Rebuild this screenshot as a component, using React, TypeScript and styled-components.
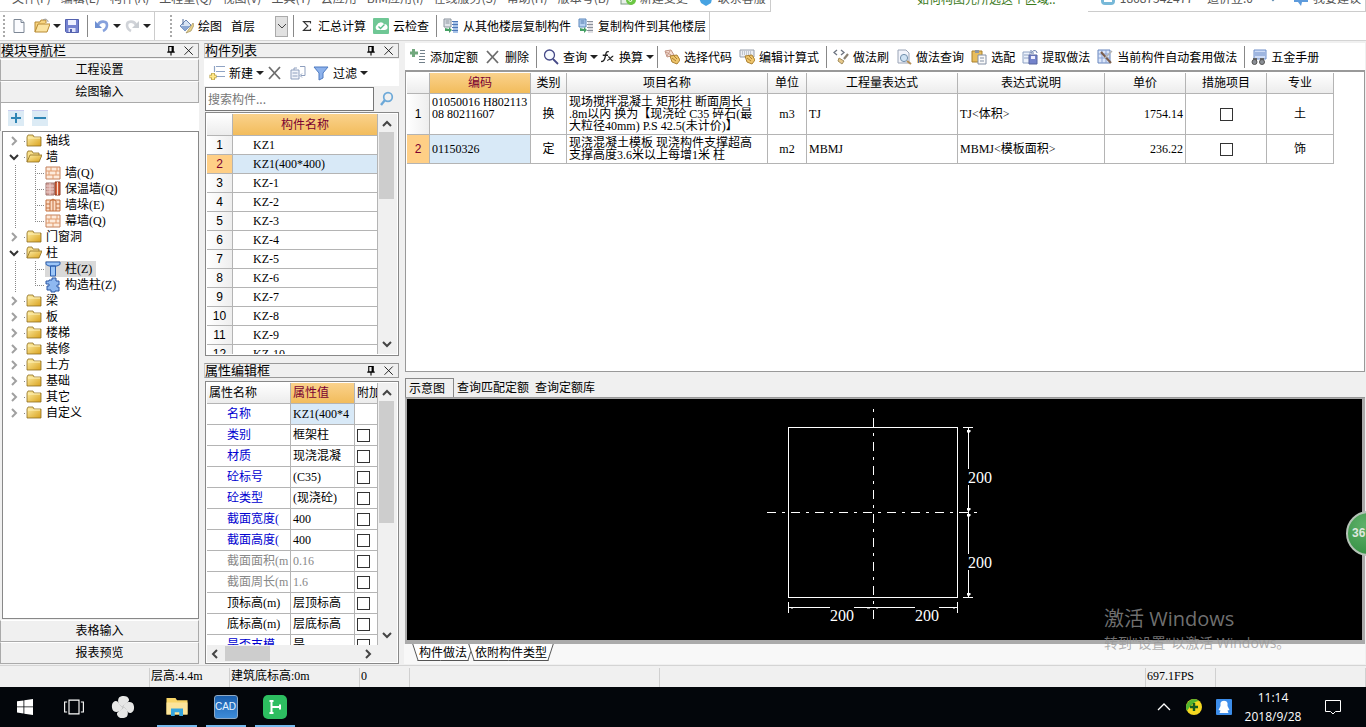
import React from 'react';
import styled, { createGlobalStyle, css } from 'styled-components';

const songti = "'Liberation Serif', 'Noto Sans CJK SC', serif";
const yahei = "'Noto Sans CJK SC', 'Open Sans', sans-serif";
const segoe = "'Open Sans', 'Noto Sans CJK SC', sans-serif";

const Global = createGlobalStyle`
  *, *::before, *::after { box-sizing: border-box; }
  body { margin: 0; background: #f0f0f0; color: #000; font: 12px/16px ${songti}; overflow: hidden; }
  button, input, select { font: inherit; color: inherit; margin: 0; }
  button { border: 0; padding: 0; background: none; white-space: nowrap; }
  svg { display: block; flex: none; }
`;

/* ---------- icons ---------- */

const paths: Record<string, React.ReactNode> = {
  doc: <><path d="M3 1.5h7l3 3v10H3z" fill="#fbfcff" stroke="#7d8795" /><path d="M10 1.5v3h3" fill="#dfe5ee" stroke="#7d8795" /></>,
  open: <><path d="M1 14V4h5l1-2h5v3" fill="#f7d480" stroke="#b78a34" /><path d="M1 14l3-8h12l-3 8z" fill="#fbe3a0" stroke="#b78a34" /><path d="M9 2c3-2 5 0 5 2" fill="none" stroke="#999" /></>,
  save: <><path d="M1.500 1.500h13v13h-12l-1-1z" fill="#7482d0" stroke="#5361ae" /><path d="M4 2h8v5H4z" fill="#eef1ff" /><path d="M4.500 10h7v4h-7z" fill="#dfe3fa" /><path d="M6 11h2v3H6z" fill="#5361ae" /></>,
  undo: <><path d="M4 7c2-5 9-4 9 0 0 3-2 5-4 6" fill="none" stroke="#86a1dc" strokeWidth="2.600" /><path d="M1 3v7h7z" fill="#6d8fd2" /></>,
  redo: <><path d="M12 7c-2-5-9-4-9 0 0 3 2 5 4 6" fill="none" stroke="#d0d3d8" strokeWidth="2.600" /><path d="M15 3v7H8z" fill="#c9cdd2" /></>,
  paint: <><path d="M2 8l6-6 5 5-6 6z" fill="#d8e4f4" stroke="#6b87b5" /><path d="M5 1v6" stroke="#506d9b" /><path d="M2 8h10l-5 5z" fill="#8ba7d3" /><path d="M15 5l-4 6-3 4 5-2 3-6z" fill="#ead28a" stroke="#9d8e5c" strokeWidth=".7" /></>,
  sigma: <path d="M12 5V3H4l5 5-5 5h8v-2" fill="none" stroke="#333" strokeWidth="1.300" />,
  cloud: <><rect width="16" height="16" rx="1" fill="#6fc795" /><path d="M4 12a3 3 0 010-5 4 4 0 017-1 3 3 0 011 6z" fill="#fff" /><path d="M5.500 8.500l2 2 4-4" fill="none" stroke="#58bd8a" strokeWidth="1.300" /></>,
  copyFloor: <><path d="M1 1h7v8H1z" fill="#e1e5ea" stroke="#8a929c" /><path d="M2.500 3h4M2.500 5h4" stroke="#8a929c" /><path d="M10 3h5v12h-5z" fill="#a8c3e8" /><path d="M9 3.500h6M9 6.500h6M9 9.500h6M9 12.500h6" stroke="#4d79b8" /><path d="M2 10v3h4v2l3-3-3-3v2z" fill="#45a064" /></>,
  copyFloorTo: <><path d="M1 1h7v8H1z" fill="#b6d2f2" stroke="#5c87bb" /><path d="M2.500 3h4M2.500 5h4" stroke="#4f77aa" /><path d="M10 3h5v12h-5z" fill="#e0e0e4" /><path d="M9 3.500h6M9 6.500h6M9 9.500h6M9 12.500h6" stroke="#8b919b" /><path d="M2 10v3h4v2l3-3-3-3v2z" fill="#45a064" /></>,
  addList: <><path d="M3.500 0v8M0 4h8" stroke="#72a87e" strokeWidth="3" /><path d="M10 1.500h5M10 4.500h5M9 7.500h6M9 10.500h6M9 13.500h6" stroke="#72808a" /></>,
  newItem: <><path d="M7 1.500h9M7 6.500h9M7 11.500h9M5.500 1v6" stroke="#8fa3c4" strokeWidth="1.200" fill="none" /><path d="M4 8v7M.5 11.500h7" stroke="#b49a36" strokeWidth="3.600" /><path d="M4 8.500v6M1 11.500h6" stroke="#ffe88a" strokeWidth="2" /></>,
  cross: <path d="M2 2l11 12M13 2L2 14" stroke="#6d6d6d" strokeWidth="1.800" />,
  copy: <><path d="M1 5h8v9H1z" fill="#f2f5fb" stroke="#8e9fbe" /><path d="M2.500 8h5M2.500 11h5M4 5V3h3" stroke="#8e9fbe" fill="none" /><path d="M10 1.500h5v9h-4M12 8.500l-2 2 2 2" fill="none" stroke="#8e9fbe" /></>,
  filter: <path d="M1 2h14l-5 6v5l-4 2V8z" fill="#8db2ec" stroke="#4f7bc0" />,
  search: <><circle cx="6.500" cy="6" r="5" fill="#f7faff" stroke="#454987" strokeWidth="1.300" /><path d="M10 10l5 5" stroke="#454987" strokeWidth="1.800" /></>,
  find: <><circle cx="9" cy="6" r="4.300" fill="none" stroke="#6da9d8" strokeWidth="1.700" /><path d="M6 9l-4 5" stroke="#6da9d8" strokeWidth="2.400" /></>,
  fx: <><path d="M9 2C6 1 5.500 4 5 7S3 14 0 13M2 6h6" fill="none" stroke="#222" strokeWidth="1.500" /><path d="M8 8c3-1 2 5 6 4M14 7c-2 0-4 5-7 5" fill="none" stroke="#222" strokeWidth="1.300" /></>,
  codeHand: <><path d="M1 2l6-1 3 5-7 2z" fill="#f7dfd5" stroke="#c29584" /><path d="M2 3l5 3M6 2L3 7" stroke="#c29584" /><path d="M6 7l7-1 3 5-3 4-5-2z" fill="#efc56b" stroke="#ac8132" /><path d="M8 9l4 3M10 7l3 3" stroke="#ac8132" /></>,
  calcHand: <><path d="M1 1h14v7H1z" fill="#eceef3" stroke="#979eab" /><path d="M3 3h10M3 5h10" stroke="#979eab" strokeDasharray="1 1" /><path d="M6 7l7-1 3 5-3 4-5-2z" fill="#efc56b" stroke="#ac8132" /><path d="M8 9l4 3M10 7l3 3" stroke="#ac8132" /></>,
  brush: <><path d="M4 1L1 3.500 4 6M8 1l3 2.500L8 6" fill="none" stroke="#6d7480" strokeWidth="1.300" /><path d="M15 5l-4 5" stroke="#8a8171" strokeWidth="2.200" /><path d="M6 9l5 3-2 3-4-3z" fill="#e7c98a" stroke="#a38d5e" /></>,
  docSearch: <><path d="M2 1h8l3 3v10H2z" fill="#f2f4fb" stroke="#9aa4b6" /><circle cx="8" cy="9" r="3.600" fill="#cfe2f3" stroke="#7290ac" /><path d="M11 12l4 3" stroke="#b58e55" strokeWidth="2" /></>,
  paste: <><path d="M1 2h10v11H1z" fill="#e8bd5c" stroke="#a8802f" /><path d="M4 1h4v3H4z" fill="#8f969f" /><path d="M7 6h8v9H7z" fill="#fafafa" stroke="#8390a5" /><path d="M9 9h4M9 12h4" stroke="#8390a5" /></>,
  extract: <><path d="M1 3h7v11H1z" fill="#edf2fb" stroke="#8ea2c4" /><path d="M2 6h5M2 9h5" stroke="#8ea2c4" /><path d="M7 6h8v9H7z" fill="#7483cb" stroke="#56649f" /><path d="M9 7h4v3H9z" fill="#eef" /><path d="M15 4c0-3-4-3-5-1M9 1v3h3" fill="none" stroke="#5c74a5" /></>,
  auto: <><path d="M1 1h12v13H1z" fill="#dbe6fa" stroke="#6785bd" /><path d="M1 5h12M1 9h12M5 1v13M9 1v13" stroke="#8ba3d3" /><path d="M4 3l10 11" stroke="#7b5d4b" strokeWidth="2" /><path d="M15 2l-7 7" stroke="#b4b4b4" strokeWidth="1.500" /></>,
  manual: <><path d="M3 1h12v9H3z" fill="#cedcf6" stroke="#6f8fc9" /><path d="M4 4h10M4 6h10" stroke="#6f8fc9" /><path d="M2 9h4v4H2zM9 9h4v4H9z" fill="#666" /><circle cx="3.500" cy="13" r="2.500" fill="#8b8f95" stroke="#555" /><circle cx="11" cy="13" r="2.500" fill="#8b8f95" stroke="#555" /></>,
  plus: <><rect width="16" height="16" fill="#dcebf5" /><path d="M0 .5h16" stroke="#c9cdf0" /><path d="M8 3v10M3 8h10" stroke="#2f86b5" strokeWidth="2" /></>,
  minus: <><rect width="16" height="16" fill="#dcebf5" /><path d="M0 .5h16" stroke="#c9cdf0" /><path d="M2 8h12" stroke="#2f86b5" strokeWidth="2" /></>,
  folder: <><path d="M1 4l1-2h5l1 2h7v9H1z" fill="url(#gold)" stroke="#8d6d20" strokeWidth=".8" /><path d="M2 5h12" stroke="#fff3bd" /></>,
  folderOpen: <><path d="M1 13V4l1-2h4l1 2h6v2" fill="#f9e08b" stroke="#8d6d20" strokeWidth=".8" /><path d="M1 13l3-7h12l-3 7z" fill="url(#gold)" stroke="#8d6d20" strokeWidth=".8" /></>,
  wall: <><path d="M1 2h14v12H1z" fill="#fdebdc" stroke="#c4805a" /><path d="M1 6h14M1 10h14M6 2v4M11 6v4M4 6v4M8 10v4M12 2v4" stroke="#e09a6c" /></>,
  warm: <><path d="M1 2h8v12H1z" fill="#d4a09a" stroke="#a17670" /><path d="M1 5h8M1 8h8M1 11h8M5 2v12" stroke="#ead0cc" /><path d="M10 1h5v13h-5z" fill="#d76540" stroke="#8a3820" /><path d="M12.500 1v13" stroke="#fce2d0" /></>,
  pier: <><path d="M1 3h14v11H1z" fill="#fbdcc6" stroke="#c4703f" /><path d="M5 14V4l3-2 3 2v10M8 2v12M1 7h4M11 7h4M1 11h4M11 11h4" fill="none" stroke="#c4703f" /></>,
  column: <path d="M1 1h14v2.500L12 5H4L1 3.500zM5.500 5h5v10h-5z" fill="#9cc6f8" stroke="#2c5fae" />,
  structCol: <path d="M4 3h3V1h4v3h3v4h-2v2h2v4h-4v1H6v-2H2V9h2V7H1V4h3z" fill="#8fb9f0" stroke="#2a56a4" />,
  pin: <path d="M5 2h6v7H5zM9.500 2v7M3 9.500h10M8 10v4" fill="none" stroke="#000" strokeWidth="1.500" />,
  close: <path d="M2 2l11 11M13 2L2 13" stroke="#111" strokeWidth="1.200" />,
  refresh: <><rect x="1" y="1" width="11" height="13" fill="#e9efe9" stroke="#7b9a80" /><circle cx="11" cy="10" r="5" fill="#6cc644" /><path d="M8.500 10l2 2 3-4" stroke="#fff" fill="none" /></>,
  bird: <path d="M2 4l4-3h5l4 4-2 8-5 3-5-3-2-5z" fill="#47a3e2" />,
  mail: <><rect x="1" y="1" width="14" height="14" rx="4" fill="#77b8d8" /><path d="M4 7h8v5H4z" fill="#fff" /></>,
  chat: <path d="M1 2h14v10H9l-1 4-3-4H1z" fill="#5d9bdc" />,
  win: <path d="M0 2.300L6.500 1.400v6.100H0zM7.300 1.300L16 0v7.500H7.300zM0 8.300h6.500v6.200L0 13.600zM7.300 8.300H16V16l-8.700-1.300z" fill="#fff" />,
  view: <path d="M4 2.500h8v11H4zM2.500 4H.5v8h2M13.500 4h2v8h-2" fill="none" stroke="#fff" strokeWidth=".9" />,
  fan: <g fill="#e6e6e6">{[0, 90, 180, 270].map(a => <path key={a} d="M8 8C5 7.500 3.800 3.500 5.500 1.500 7.500 0 11.500.3 12 3 12.300 5.500 9 5 8 8z" transform={`rotate(${a} 8 8)`} />)}</g>,
  explorer: <><path d="M1 2h6l1 1.500h7V13H1z" fill="#f8d568" /><path d="M1 5h14v8H1z" fill="#fce49a" /><path d="M4 14V9h8v5h-2.500v-2.500h-3V14z" fill="#35a5df" /></>,
  branch: <path d="M4.500 1.500v13M2.500 2h4M2.500 14h4M5 8h8.500M13 5.500v5" fill="none" stroke="#fff" strokeWidth="2" />,
  shield: <><circle cx="8" cy="8" r="8" fill="#f5d820" /><path d="M1 12A8 8 0 0113 2C9 2 4 7 1 12z" fill="#53b531" /><path d="M8 4v8M4 8h8" stroke="#145a20" strokeWidth="2.400" /></>,
  penguin: <><rect width="16" height="16" rx="1" fill="#3c8dea" /><path d="M4.500 4c1-3 6-3 7 0v3l2 4-2 .5 1 2.500h-9l1-2.500L2.500 11l2-4z" fill="#fff" /></>,
  up: <path d="M2 11l6-6 6 6" fill="none" stroke="#fff" strokeWidth="1.300" />,
  note: <path d="M.5 1.500h15v11h-5L8 15l-2.500-2.500h-5z" fill="none" stroke="#fff" />,
};

const Icon = ({ name, size = 16 }: { name: string; size?: number }) => (
  <svg width={size} height={size} viewBox="0 0 16 16" aria-hidden="true">
    <defs><linearGradient id="gold" x1="0" y1="0" x2="1" y2="1"><stop offset="0" stopColor="#fff0a8" /><stop offset="1" stopColor="#d9a21e" /></linearGradient></defs>
    {paths[name]}
  </svg>
);

const arrowShapes = { up: 'M2 8l4-4 4 4', down: 'M2 4l4 4 4-4', left: 'M8 2L4 6l4 4', right: 'M4 2l4 4-4 4' };
const Arrow = ({ to, color = '#444', thin }: { to: keyof typeof arrowShapes; color?: string; thin?: boolean }) => (
  <svg width="12" height="12" viewBox="0 0 12 12" aria-hidden="true"><path d={arrowShapes[to]} fill="none" stroke={color} strokeWidth={thin ? 1 : 2} /></svg>
);

/* ---------- frame ---------- */

const Page = styled.div`
  position: relative; display: flex; flex-direction: column; height: 100vh; overflow: hidden; background: #f0f0f0;
`;
const MenuStrip = styled.nav`
  display: flex; justify-content: space-between; height: 12px; flex: none; background: #fff; font-family: ${yahei}; color: #555; overflow: hidden;
`;
const MenuGroup = styled.div<{ $gap: number }>`
  display: flex; align-items: flex-end; gap: ${p => p.$gap}px; padding: 0 4px 5px 12px; overflow: hidden;
  border: solid #ccc; border-width: 0 1px 1px 0;
`;
const MenuButton = styled.button`
  display: flex; align-items: center; gap: 4px; height: 16px; line-height: 16px;
`;
const Tip = styled.span`
  margin-left: auto; margin-right: 32px; height: 12px; display: flex; align-items: flex-end; padding-bottom: 5px; color: #3c7a1c; line-height: 16px;
`;
const Bars = styled.div`
  display: flex; height: 29px; flex: none; background: #fff; border-bottom: 1px solid #d4d4d4; font-family: ${yahei};
`;
const Bar = styled.div`
  display: flex; align-items: center; padding-left: 12px; margin-right: 12px; border-right: 1px solid #ccc;
  &::before { content: ''; align-self: center; width: 2px; height: 22px; margin-left: -9px; margin-right: 6px;
    background: repeating-linear-gradient(#aaa 0 2px, #fff 2px 4px); }
`;
const Tool = styled.button<{ $tight?: boolean }>`
  display: flex; align-items: center; gap: 4px; height: 22px; padding-right: ${p => (p.$tight ? 3 : 7)}px; line-height: 16px;
`;
const Caret = styled.i`
  margin-left: -1px; border: 4px solid transparent; border-top-color: #222; border-bottom: 0;
`;
const Sep = styled.span`
  width: 1px; height: 22px; margin-right: 6px; background: #888;
`;
const FloorPick = styled.label`
  display: flex; align-items: center; height: 22px; margin: 0 5px 0 2px;
  select { appearance: none; width: 44px; height: 20px; border: 0; padding: 0; background: #fff; }
  span { display: flex; align-items: center; justify-content: center; width: 13px; height: 21px; background: #e1e1e1; border: 1px solid #aaa; }
`;

const Work = styled.main`
  flex: 1; min-height: 0; display: grid; grid-template-columns: 199px 195px minmax(0, 1fr); column-gap: 5px; padding: 2px 1px 0 0;
`;
const Dock = styled.section`
  display: flex; flex-direction: column; min-height: 0; min-width: 0;
`;
const DockTitle = styled.h2`
  display: flex; align-items: center; flex: none; height: 15px; margin: 0; padding-right: 3px; border: 1px solid #999; border-left-color: #ccc;
  font: 13px/13px ${songti};
  & > span { flex: 1; }
  button { margin-left: 6px; }
`;
const ModeButtons = styled.div`
  display: flex; flex-direction: column; flex: none; padding-top: 1px;
`;
const WideButton = styled.button`
  flex: none; height: 22px; border: 1px solid #aaa; border-top-color: #fff; background: #f0f0f0; line-height: 20px; text-align: center;
`;

/* ---------- navigation tree ---------- */

const TreeTools = styled.div`
  display: flex; gap: 8px; height: 28px; padding: 7px 7px 5px; flex: none; background: #fff; border-left: 1px solid #aaa;
`;
const TreeBox = styled.ul`
  flex: 1; min-height: 0; margin: 0 0 0 2px; padding: 1px 0 0 3px; list-style: none; overflow: hidden;
  background: #fff; border: 1px solid #888;
`;
const TreeRow = styled.li`
  display: flex; align-items: center; height: 16px;
`;
const Toggle = styled.span`
  display: flex; width: 18px; padding-left: 2px;
`;
const vDots = 'repeating-linear-gradient(to bottom, #888 0 1px, transparent 1px 2px)';
const hDots = 'repeating-linear-gradient(to right, #888 0 1px, transparent 1px 2px)';
const Stub = styled.span`
  width: 2px; height: 1px; background: ${hDots};
`;
const Guide = styled.span`
  width: 20px; height: 16px; margin-left: 9px; background: ${vDots} 0 0 / 1px 100% no-repeat;
`;
const Branch = styled.span<{ $last?: boolean }>`
  width: 10px; height: 16px;
  background: ${vDots} 0 0 / 1px ${p => (p.$last ? '50%' : '100%')} no-repeat, ${hDots} 0 8px / 100% 1px no-repeat;
`;
const Node = styled.span<{ $on?: boolean }>`
  display: flex; align-items: center; gap: 4px; height: 16px; padding-right: 4px; ${p => p.$on && 'background: #d9d9d9;'}
`;

type Leaf = [string, string];
const tree: { name: string; leaves?: Leaf[] }[] = [
  { name: '轴线' },
  { name: '墙', leaves: [['wall', '墙(Q)'], ['warm', '保温墙(Q)'], ['pier', '墙垛(E)'], ['wall', '幕墙(Q)']] },
  { name: '门窗洞' },
  { name: '柱', leaves: [['column', '柱(Z)'], ['structCol', '构造柱(Z)']] },
  ...['梁', '板', '楼梯', '装修', '土方', '基础', '其它', '自定义'].map(name => ({ name })),
];

const Tree = () => (
  <TreeBox>
    {tree.map(g => (
      <React.Fragment key={g.name}>
        <TreeRow>
          <Toggle><Arrow to={g.leaves ? 'down' : 'right'} color={g.leaves ? '#333' : '#a0a0a0'} /></Toggle>
          <Stub />
          <Node><Icon name={g.leaves ? 'folderOpen' : 'folder'} />{g.name}</Node>
        </TreeRow>
        {g.leaves?.map(([icon, text], i) => (
          <TreeRow key={text}>
            <Guide />
            <Branch $last={i === g.leaves!.length - 1} />
            <Node $on={text === '柱(Z)'}><Icon name={icon} />{text}</Node>
          </TreeRow>
        ))}
      </React.Fragment>
    ))}
  </TreeBox>
);

/* ---------- grids ---------- */

const Gridish = styled.table`
  table-layout: fixed; border-collapse: separate; border-spacing: 0; background: #fff;
  th, td { padding: 0 2px; border: solid #b4b4b4; border-width: 0 1px 1px 0; overflow: hidden; white-space: nowrap; line-height: 12px; }
  th { font-weight: normal; background: linear-gradient(#fff, #ececec); }
`;
const HeadCell = styled.th<{ $hot?: boolean; $left?: boolean }>`
  && { ${p => p.$hot && 'background: linear-gradient(#fad28c, #f2bc5c); color: #7a0030;'} ${p => p.$left && 'text-align: left;'} }
`;
const Gutter = styled.th<{ $on?: boolean }>`
  && { font-family: 'Liberation Sans', sans-serif; background: ${p => (p.$on ? '#ffcf86' : 'linear-gradient(to right, #fff, #eee)')}; ${p => p.$on && 'color: #7a0030;'} }
`;
const Cell = styled.td<{ $on?: boolean; $align?: string; $indent?: boolean; $color?: string }>`
  && {
    text-align: ${p => p.$align || 'left'}; ${p => p.$on && 'background: #d8e9f7;'}
    ${p => p.$indent && 'padding-left: 20px;'} ${p => p.$color && `color: ${p.$color};`}
  }
`;
const Check = styled.input.attrs({ type: 'checkbox' })<{ $center?: boolean }>`
  appearance: none; display: block; width: 13px; height: 13px; border: 1px solid #333; background: #fff;
  && { margin: 0 ${p => (p.$center ? 'auto' : 0)}; }
`;

const GridFrame = styled.div<{ $fixed?: boolean }>`
  display: flex; min-height: 0; margin-left: 1px; padding: 1px; border: 1px solid #888; background: #fff;
  ${p => (p.$fixed ? 'height: 244px; flex: none;' : 'flex: 1;')}
`;
const GridView = styled.div`
  flex: 1; min-width: 0; overflow: hidden;
`;
const Column = styled.div`
  flex: 1; min-width: 0; min-height: 0; display: flex; flex-direction: column;
`;
const BodyRow = styled.div`
  display: flex; flex: 1; min-height: 0;
`;
const VScroll = styled.div<{ $thumb: number }>`
  display: flex; flex-direction: column; align-items: center; width: 19px; flex: none; padding: 4px 3px 4px 1px; background: #f0f0f0;
  i { width: 15px; height: ${p => p.$thumb}px; margin: 2px 0 auto; background: #cdcdcd; }
`;
const HScroll = styled.div`
  display: flex; align-items: center; height: 17px; flex: none; padding: 0 23px 0 2px; background: #f0f0f0;
  i { width: 45px; height: 15px; margin: 0 auto 0 4px; background: #cdcdcd; }
`;
const ListTools = styled.div`
  display: flex; align-items: center; flex: none; height: 27px; margin-top: 1px; padding-left: 5px; background: #fff; font-family: ${yahei};
`;
const SearchRow = styled.div`
  display: flex; flex: none; height: 24px; margin: 1px 0 1px 1px;
  input { flex: 1; min-width: 0; border: 1px solid #777; padding: 0 2px; font-family: ${yahei}; background: #fff; }
  input::placeholder { color: #777; }
  button { width: 25px; display: flex; align-items: center; justify-content: center; }
`;
const PropTitle = styled.div`
  flex: none; padding: 7px 0 3px;
`;

const members = ['KZ1', 'KZ1(400*400)', ...Array.from({ length: 10 }, (_, i) => `KZ-${i + 1}`)];
const MemberTable = styled(Gridish)`
  width: 100%; th, td { height: 19px; } thead th { height: 22px; } td { line-height: 16px; }
`;
const PropTable = styled(Gridish)`
  width: 100%; th { height: 21px; } td { height: 21px; line-height: 16px; }
`;
const blue = '#0000d0';
const props: [string, string, string?][] = [
  ['名称', 'KZ1(400*4', blue], ['类别', '框架柱', blue], ['材质', '现浇混凝', blue], ['砼标号', '(C35)', blue],
  ['砼类型', '(现浇砼)', blue], ['截面宽度(', '400', blue], ['截面高度(', '400', blue], ['截面面积(m', '0.16', '#888'],
  ['截面周长(m', '1.6', '#888'], ['顶标高(m)', '层顶标高'], ['底标高(m)', '层底标高'], ['是否支模', '是', blue],
];

/* ---------- quota table ---------- */

const QuotaTools = styled.div`
  display: flex; align-items: center; flex: none; height: 27px; margin-left: 1px; padding-left: 5px; background: #fff; font-family: ${yahei}; overflow: hidden;
`;
const QuotaBox = styled.div`
  flex: 302 1 0; min-height: 0; margin-left: 1px; padding: 1px; background: #fff; border: 1px solid #999; border-top-width: 2px; overflow: hidden;
`;
const QuotaTable = styled(Gridish)`
  width: 927px; thead th { height: 21px; } tbody tr:first-child td { height: 41px; } tbody tr:last-child td { height: 29px; }
`;
const quotaCols: [string, number][] = [
  ['', 23], ['编码', 101], ['类别', 36], ['项目名称', 201], ['单位', 39], ['工程量表达式', 151], ['表达式说明', 147], ['单价', 81], ['措施项目', 81], ['专业', 67],
];
const quotas = [
  { code: ['01050016 H802113', '08 80211607'], kind: '换', name: ['现场搅拌混凝土 矩形柱 断面周长 1', '.8m以内 换为【现浇砼 C35 碎石(最', '大粒径40mm) P.S 42.5(未计价)】'], unit: 'm3', expr: 'TJ', desc: 'TJ<体积>', price: '1754.14', major: '土' },
  { code: ['01150326'], kind: '定', name: ['现浇混凝土模板 现浇构件支撑超高', '支撑高度3.6米以上每增1米 柱'], unit: 'm2', expr: 'MBMJ', desc: 'MBMJ<模板面积>', price: '236.22', major: '饰' },
];
const Lines = ({ of }: { of: string[] }) => <>{of.map((l, i) => <React.Fragment key={l}>{i > 0 && <br />}{l}</React.Fragment>)}</>;
const TopLines = styled.div<{ $top?: boolean }>`
  ${p => p.$top && 'height: 36px;'}
`;

const quotaTools: ([string, string, boolean?] | null)[] = [
  ['addList', '添加定额'], ['cross', '删除'], null, ['search', '查询', true], ['fx', '换算', true], null, ['codeHand', '选择代码'], ['calcHand', '编辑计算式'], null,
  ['brush', '做法刷'], ['docSearch', '做法查询'], ['paste', '选配'], ['extract', '提取做法'], ['auto', '当前构件自动套用做法'], null, ['manual', '五金手册'],
];

/* ---------- drawing ---------- */

const ViewTabs = styled.div`
  display: flex; flex: none; height: 20px; margin: 6px 0 0 1px; border-bottom: 1px solid #999;
`;
const ViewTab = styled.button<{ $on?: boolean }>`
  height: 19px; padding: 0 3px; line-height: ${p => (p.$on ? 21 : 16)}px;
  ${p => p.$on && 'border: solid #888; border-width: 1px 1px 0 1px; padding: 0 8px 0 3px;'}
`;
const Canvas = styled.div`
  flex: 245 1 0; min-height: 0; margin-left: 1px; display: flex; align-items: center; justify-content: center;
  background: #000; border: solid #aaa; border-width: 1px 3px 4px 2px; overflow: hidden;
`;
const SheetTabs = styled.div`
  display: flex; height: 20px; flex: none; padding-left: 11px; background: #f8f8f8;
`;
const SheetTab = styled.button`
  position: relative; z-index: 0; height: 17px; padding: 0 4px; line-height: 18px;
  &::before, &::after { content: ''; position: absolute; z-index: -1; top: 0; bottom: 0; background: #fff; border-bottom: 1px solid #555; }
  &::before { left: 0; right: 50%; border-left: 1px solid #555; transform: skewX(18deg); }
  &::after { left: 50%; right: 0; border-right: 1px solid #555; transform: skewX(-18deg); }
`;
const DimText = styled.text`
  font: 16px 'Liberation Serif', serif; fill: #fff;
`;

const Section = () => (
  <svg width="240" height="240" viewBox="765 400 240 240" fill="none" stroke="#fff" shapeRendering="crispEdges" role="img" aria-label="柱截面示意图">
    <rect x="788.5" y="427.5" width="169" height="170" />
    <path d="M873.5 409v212" strokeDasharray="3 6 9 6" />
    <path d="M767 512.5h212" strokeDasharray="9 6 3 6" />
    <path d="M963 427.500h10M963 597.500h10M968.500 428v41M968.500 485v69M968.500 570v27" />
    <path d="M788.500 602v11M957.500 602v11M789 607.500h41M854 607.500h61M939 607.500h18" />
    <path d="M967 430h3v2h-3zM967 508h3v2h-3zM967 514h3v2h-3zM967 593h3v2h-3zM791 607h2v1h-2zM867 607h3v1h-3zM876 607h2v1h-2zM953 607h2v1h-2z" fill="#fff" stroke="#fff" strokeWidth=".5" />
    <g stroke="none">
      <DimText x="968" y="483">200</DimText>
      <DimText x="968" y="568">200</DimText>
      <DimText x="830" y="621">200</DimText>
      <DimText x="915" y="621">200</DimText>
    </g>
  </svg>
);

/* ---------- bottom bars ---------- */

const Status = styled.footer`
  display: flex; flex: none; height: 22px; margin-top: 1px; border-top: 1px solid #d4d4d4; background: #f0f0f0;
`;
const StatusCell = styled.span<{ $w?: number }>`
  ${p => (p.$w ? `width: ${p.$w}px; flex: none;` : 'flex: 1;')}
  margin-top: 2px; padding-left: 1px; border-right: 1px solid #d0d0d0; line-height: 16px; white-space: nowrap;
`;
const Taskbar = styled.div`
  display: flex; align-items: stretch; flex: none; height: 40px; background: #03060b; color: #fff; font: 12px/19px ${segoe};
`;
const Task = styled.button<{ $open?: boolean; $gap?: boolean }>`
  display: flex; align-items: center; justify-content: center; width: 49px; padding: 0 4px; ${p => p.$gap && 'margin-left: 5px;'}
  ${p => p.$open && 'background: linear-gradient(#76b9ed, #76b9ed) 50% 100% / 40px 2px no-repeat;'}
`;
const AppTile = styled.span<{ $green?: boolean }>`
  display: flex; align-items: center; justify-content: center; width: 24px; height: 24px; border-radius: ${p => (p.$green ? 5 : 3)}px;
  background: ${p => (p.$green ? '#2dbe60' : 'linear-gradient(#1a5fae, #3d8bd8)')}; border: ${p => (p.$green ? 0 : '1px solid #8fa9c4')};
  font: 10px/12px 'Liberation Sans', sans-serif; color: #e8f4ff;
`;
const Tray = styled.div`
  display: flex; align-items: center; margin-left: auto; padding-right: 25px; gap: 14px;
`;
const TrayIcons = styled.span`
  display: flex; align-items: center; gap: 14px; margin-right: -7px;
`;
const Clock = styled.time`
  width: 68px; margin-right: 4px; text-align: center;
`;
const Watermark = styled.div`
  position: absolute; right: 66px; bottom: 73px; width: 196px; color: rgba(150, 150, 150, .75); font: 20px/26px ${segoe}; pointer-events: none; white-space: nowrap;
  small { display: block; font-size: 14px; line-height: 22px; }
`;
const Ball = styled.div`
  position: absolute; right: -25px; bottom: 171px; width: 45px; height: 45px; border-radius: 50%; border: 2px solid #b5c3b7; padding-left: 4px;
  background: radial-gradient(circle at 40% 30%, #5fb069, #2c8a3c); color: #dfe8df; font: bold 12px/41px 'Liberation Sans', sans-serif;
`;

const menus = ['文件(F)', '编辑(E)', '构件(A)', '工程量(Q)', '视图(V)', '工具(T)', '云应用', 'BIM应用(I)', '在线服务(S)', '帮助(H)', '版本号(B)'];

const Title = ({ text }: { text: string }) => (
  <DockTitle><span>{text}</span><button aria-label="固定"><Icon name="pin" size={12} /></button><button aria-label="关闭"><Icon name="close" size={12} /></button></DockTitle>
);

export default function App() {
  return (
    <Page>
      <Global />
      <MenuStrip>
        <MenuGroup $gap={10}>
          {menus.map(m => <MenuButton key={m}>{m}</MenuButton>)}
          <MenuButton><Icon name="refresh" />新建变更</MenuButton>
          <MenuButton><Icon name="bird" />联系客服</MenuButton>
        </MenuGroup>
        <Tip>如何构图元所选这个区域..</Tip>
        <MenuGroup $gap={14}>
          <MenuButton><Icon name="mail" />18687542477</MenuButton>
          <MenuButton>造价豆:0</MenuButton>
          <MenuButton aria-label="展开"><Arrow to="down" color="#5b88ac" /></MenuButton>
          <MenuButton><Icon name="chat" />我要建议</MenuButton>
        </MenuGroup>
      </MenuStrip>

      <Bars>
        <Bar>
          <Tool aria-label="新建"><Icon name="doc" /></Tool>
          <Tool $tight aria-label="打开"><Icon name="open" /><Caret /></Tool>
          <Tool aria-label="保存"><Icon name="save" /></Tool>
          <Sep />
          <Tool $tight aria-label="撤销"><Icon name="undo" /><Caret /></Tool>
          <Tool $tight aria-label="恢复"><Icon name="redo" /><Caret /></Tool>
        </Bar>
        <Bar>
          <Tool><Icon name="paint" />绘图</Tool>
          <FloorPick>
            <select aria-label="楼层"><option>首层</option></select>
            <span><Arrow to="down" thin /></span>
          </FloorPick>
          <Sep />
          <Tool><Icon name="sigma" size={14} />汇总计算</Tool>
          <Tool><Icon name="cloud" />云检查</Tool>
          <Sep />
          <Tool><Icon name="copyFloor" />从其他楼层复制构件</Tool>
          <Tool $tight><Icon name="copyFloorTo" />复制构件到其他楼层</Tool>
        </Bar>
      </Bars>

      <Work>
        <Dock>
          <Title text="模块导航栏" />
          <ModeButtons>
            <WideButton>工程设置</WideButton>
            <WideButton>绘图输入</WideButton>
          </ModeButtons>
          <TreeTools>
            <button aria-label="全部展开"><Icon name="plus" /></button>
            <button aria-label="全部折叠"><Icon name="minus" /></button>
          </TreeTools>
          <Tree />
          <ModeButtons>
            <WideButton>表格输入</WideButton>
            <WideButton>报表预览</WideButton>
          </ModeButtons>
        </Dock>

        <Dock>
          <Title text="构件列表" />
          <ListTools>
            <Tool $tight><Icon name="newItem" />新建<Caret /></Tool>
            <Tool aria-label="删除"><Icon name="cross" /></Tool>
            <Tool aria-label="复制"><Icon name="copy" /></Tool>
            <Tool $tight><Icon name="filter" />过滤<Caret /></Tool>
          </ListTools>
          <SearchRow>
            <input aria-label="搜索构件" placeholder="搜索构件..." />
            <button aria-label="搜索"><Icon name="find" /></button>
          </SearchRow>
          <GridFrame $fixed>
            <GridView>
              <MemberTable>
                <colgroup><col width="26" /><col /></colgroup>
                <thead><tr><HeadCell /><HeadCell $hot>构件名称</HeadCell></tr></thead>
                <tbody>
                  {members.map((m, i) => (
                    <tr key={m}><Gutter $on={i === 1}>{i + 1}</Gutter><Cell $on={i === 1} $indent>{m}</Cell></tr>
                  ))}
                </tbody>
              </MemberTable>
            </GridView>
            <VScroll $thumb={67}><Arrow to="up" /><i /><Arrow to="down" /></VScroll>
          </GridFrame>
          <PropTitle><Title text="属性编辑框" /></PropTitle>
          <GridFrame>
            <Column>
              <BodyRow>
                <GridView>
                  <PropTable>
                    <colgroup><col width="84" /><col width="64" /><col /></colgroup>
                    <thead><tr><HeadCell $left>属性名称</HeadCell><HeadCell $left $hot>属性值</HeadCell><HeadCell $left>附加</HeadCell></tr></thead>
                    <tbody>
                      {props.map(([n, v, c], i) => (
                        <tr key={n}>
                          <Cell $indent $color={c}>{n}</Cell>
                          <Cell $on={i === 0} $color={c === '#888' ? c : undefined}>{v}</Cell>
                          <Cell>{i > 0 && <Check aria-label={n} />}</Cell>
                        </tr>
                      ))}
                    </tbody>
                  </PropTable>
                </GridView>
                <VScroll $thumb={122}><Arrow to="up" /><i /><Arrow to="down" /></VScroll>
              </BodyRow>
              <HScroll><Arrow to="left" /><i /><Arrow to="right" /></HScroll>
            </Column>
          </GridFrame>
        </Dock>

        <Dock>
          <QuotaTools>
            {quotaTools.map((t, i) => t === null ? <Sep key={i} /> : (
              <Tool key={i} $tight={t[2]}><Icon name={t[0]} size={t[0] === 'fx' ? 14 : 16} />{t[1]}{t[2] && <Caret />}</Tool>
            ))}
          </QuotaTools>
          <QuotaBox>
            <QuotaTable>
              <colgroup>{quotaCols.map(([n, w]) => <col key={n} width={w} />)}</colgroup>
              <thead><tr>{quotaCols.map(([n]) => <HeadCell key={n} $hot={n === '编码'}>{n}</HeadCell>)}</tr></thead>
              <tbody>
                {quotas.map((q, i) => (
                  <tr key={q.kind}>
                    <Gutter $on={i === 1}>{i + 1}</Gutter>
                    <Cell $on={i === 1}><TopLines $top={i === 0}><Lines of={q.code} /></TopLines></Cell>
                    <Cell $align="center">{q.kind}</Cell>
                    <Cell><Lines of={q.name} /></Cell>
                    <Cell $align="center">{q.unit}</Cell>
                    <Cell>{q.expr}</Cell>
                    <Cell>{q.desc}</Cell>
                    <Cell $align="right">{q.price}</Cell>
                    <Cell><Check $center aria-label="措施项目" /></Cell>
                    <Cell $align="center">{q.major}</Cell>
                  </tr>
                ))}
              </tbody>
            </QuotaTable>
          </QuotaBox>
          <ViewTabs>
            <ViewTab $on>示意图</ViewTab><ViewTab>查询匹配定额</ViewTab><ViewTab>查询定额库</ViewTab>
          </ViewTabs>
          <Canvas><Section /></Canvas>
          <SheetTabs>
            <SheetTab>构件做法</SheetTab><SheetTab>依附构件类型</SheetTab>
          </SheetTabs>
        </Dock>
      </Work>

      <Status>
        <StatusCell $w={150} /><StatusCell $w={80}>层高:4.4m</StatusCell><StatusCell $w={130}>建筑底标高:0m</StatusCell>
        <StatusCell $w={50}>0</StatusCell><StatusCell $w={250} /><StatusCell /><StatusCell $w={70}>697.1FPS</StatusCell><StatusCell $w={150} />
      </Status>

      <Taskbar>
        <Task aria-label="开始"><Icon name="win" /></Task>
        <Task aria-label="任务视图"><Icon name="view" size={20} /></Task>
        <Task aria-label="浏览器"><Icon name="fan" size={24} /></Task>
        <Task $open $gap aria-label="文件资源管理器"><Icon name="explorer" size={24} /></Task>
        <Task $open><AppTile>CAD</AppTile></Task>
        <Task $open aria-label="算量"><AppTile $green><Icon name="branch" /></AppTile></Task>
        <Tray>
          <TrayIcons><Icon name="up" /><Icon name="shield" /><Icon name="penguin" /></TrayIcons>
          <Clock>11:14<br />2018/9/28</Clock>
          <Icon name="note" />
        </Tray>
      </Taskbar>

      <Watermark>激活 Windows<small>转到"设置"以激活 Windows。</small></Watermark>
      <Ball>36</Ball>
    </Page>
  );
}
